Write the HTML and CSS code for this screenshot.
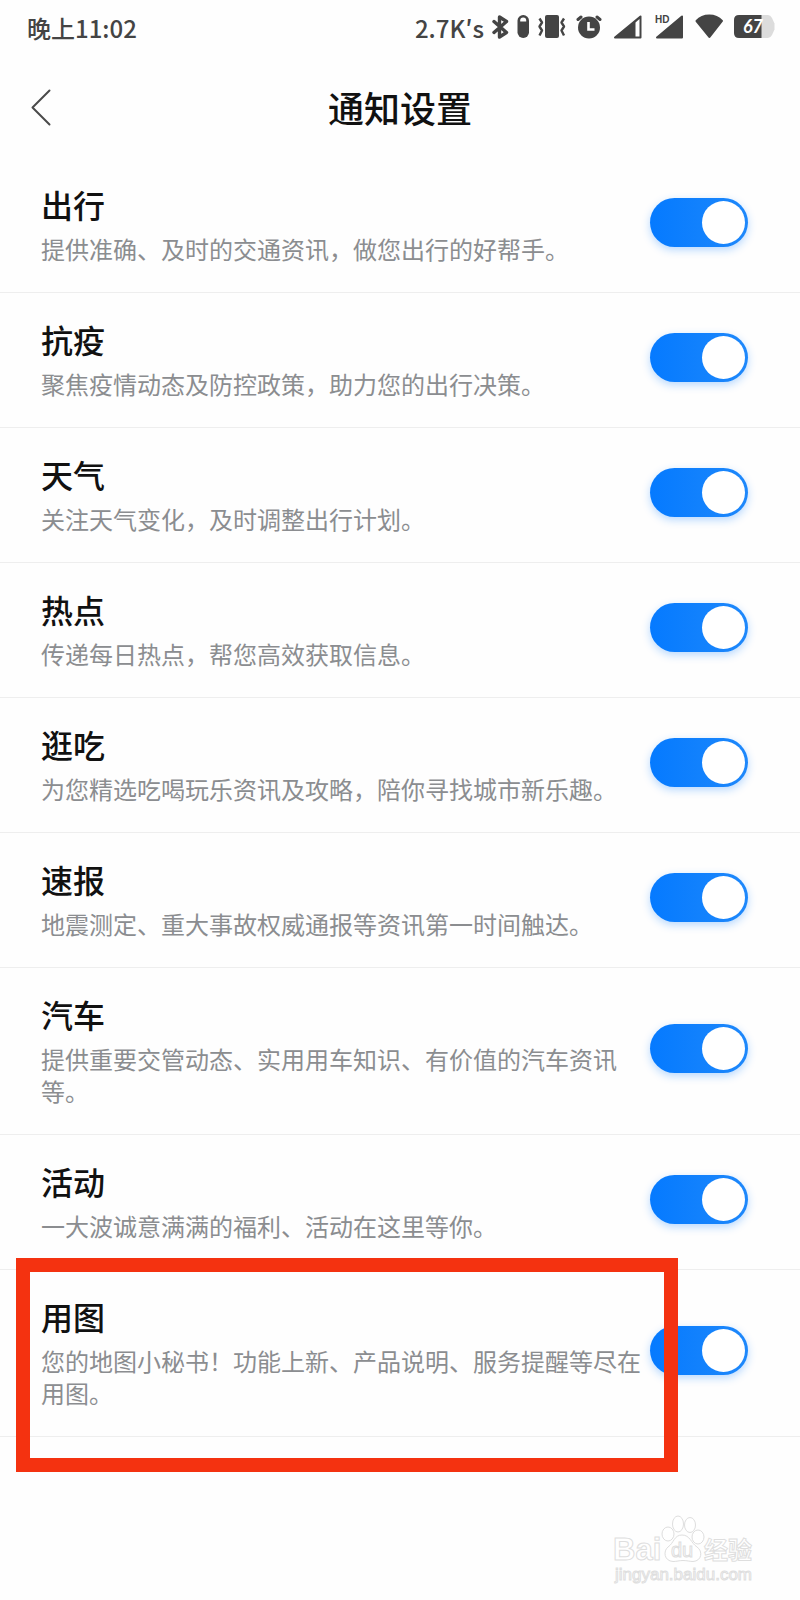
FILE: index.html
```
<!DOCTYPE html>
<html lang="zh-CN">
<head>
    <meta charset="UTF-8">
    <meta name="viewport" content="width=device-width, initial-scale=1.0">
    <title>通知设置</title>
    <link rel="stylesheet" href="styles.css">
</head>
<body>
    <div class="status-bar">
        <span class="time">晚上11:02</span>
        <div class="status-icons">
            <span class="speed">2.7K′s</span>
            <!-- bluetooth -->
            <svg width="17" height="26" viewBox="0 0 17 26" fill="none" stroke="#444" stroke-width="3.400" stroke-linejoin="round" stroke-linecap="round">
                <path d="M2 7.500L14.500 18.500L7.500 23V3L14.500 7.500L2 18.500"/>
            </svg>
            <!-- bluetooth device battery -->
            <svg width="13" height="26" viewBox="0 0 13 26">
                <rect x="0.500" y="1" width="11.500" height="23" rx="5.700" fill="#444"/>
                <path d="M3.200 7.500V6.500a3 3 0 0 1 6 0v1z" fill="#fff"/>
            </svg>
            <!-- vibrate -->
            <svg width="30" height="26" viewBox="0 0 30 26">
                <rect x="7" y="1" width="14" height="23" rx="2" fill="#444"/>
                <path d="M1.500 4.500l2.500 4-2.500 4 2.500 4-2.500 5M26 4.500l-2.500 4 2.500 4-2.500 4 2.500 5" fill="none" stroke="#444" stroke-width="2.400" stroke-linejoin="round"/>
            </svg>
            <!-- alarm -->
            <svg width="29" height="26" viewBox="0 0 29 26">
                <circle cx="13" cy="13.500" r="11" fill="#444"/>
                <path d="M2 5.500L5 3M21 3l3 2.500" stroke="#444" stroke-width="3" stroke-linecap="round"/>
                <path d="M12.500 8v7.500h6" fill="none" stroke="#fff" stroke-width="2.600"/>
            </svg>
            <!-- signal, sim 1 -->
            <svg width="34" height="26" viewBox="0 0 34 26">
                <path d="M2 23.500L27.500 2.500V23.500z" fill="#444" stroke="#444" stroke-width="2" stroke-linejoin="round"/>
                <path d="M22.500 8.500L26.500 5V22.500H22.500z" fill="#fff"/>
            </svg>
            <!-- signal, sim 2 -->
            <svg width="32" height="26" viewBox="0 0 32 26">
                <path d="M2 23.500L27 2.500V23.500z" fill="#444" stroke="#444" stroke-width="2" stroke-linejoin="round"/>
                <text x="0" y="9" class="hd">HD</text>
            </svg>
            <!-- wifi -->
            <svg width="30" height="26" viewBox="0 0 30 26">
                <path d="M1.500 7C8 -0.500 20.500 -0.500 27 7L14.500 23z" fill="#444" stroke="#444" stroke-width="2" stroke-linejoin="round"/>
            </svg>
            <!-- battery -->
            <svg width="43" height="26" viewBox="0 0 43 26">
                <path d="M28 1h7q2.500 0 4 3l2.500 5.500v6L39 21q-1.500 3-4 3h-7z" fill="#dcdcdc"/>
                <path d="M28.500 1H6Q1 1 1 6V19q0 5 5 5H28.500z" fill="#444"/>
                <text x="10" y="19" class="level">67</text>
            </svg>
        </div>
    </div>

    <header class="header">
        <button class="back" type="button" aria-label="返回">
            <svg width="22" height="38" viewBox="0 0 22 38" fill="none" stroke="#4a4a4a" stroke-width="2" stroke-linecap="round" stroke-linejoin="round">
                <path d="M19.500 2.500L2.500 19.500L19.500 36.500"/>
            </svg>
        </button>
        <h1 class="title">通知设置</h1>
    </header>

    <main class="list">
        <label class="row">
            <span class="text">
                <span class="name">出行</span>
                <span class="desc">提供准确、及时的交通资讯，做您出行的好帮手。</span>
            </span>
            <input class="switch" type="checkbox" checked>
        </label>
        <label class="row">
            <span class="text">
                <span class="name">抗疫</span>
                <span class="desc">聚焦疫情动态及防控政策，助力您的出行决策。</span>
            </span>
            <input class="switch" type="checkbox" checked>
        </label>
        <label class="row">
            <span class="text">
                <span class="name">天气</span>
                <span class="desc">关注天气变化，及时调整出行计划。</span>
            </span>
            <input class="switch" type="checkbox" checked>
        </label>
        <label class="row">
            <span class="text">
                <span class="name">热点</span>
                <span class="desc">传递每日热点，帮您高效获取信息。</span>
            </span>
            <input class="switch" type="checkbox" checked>
        </label>
        <label class="row">
            <span class="text">
                <span class="name">逛吃</span>
                <span class="desc">为您精选吃喝玩乐资讯及攻略，陪你寻找城市新乐趣。</span>
            </span>
            <input class="switch" type="checkbox" checked>
        </label>
        <label class="row">
            <span class="text">
                <span class="name">速报</span>
                <span class="desc">地震测定、重大事故权威通报等资讯第一时间触达。</span>
            </span>
            <input class="switch" type="checkbox" checked>
        </label>
        <label class="row">
            <span class="text">
                <span class="name">汽车</span>
                <span class="desc">提供重要交管动态、实用用车知识、有价值的汽车资讯等。</span>
            </span>
            <input class="switch" type="checkbox" checked>
        </label>
        <label class="row">
            <span class="text">
                <span class="name">活动</span>
                <span class="desc">一大波诚意满满的福利、活动在这里等你。</span>
            </span>
            <input class="switch" type="checkbox" checked>
        </label>
        <label class="row marked">
            <span class="text">
                <span class="name">用图</span>
                <span class="desc">您的地图小秘书！功能上新、产品说明、服务提醒等尽在用图。</span>
            </span>
            <input class="switch" type="checkbox" checked>
        </label>
    </main>

    <footer class="watermark">
        <svg width="148" height="78" viewBox="0 0 148 78" fill="#fff" stroke="#dedede" stroke-width="1">
            <text x="3" y="48" class="brand">Bai</text>
            <ellipse cx="58" cy="22" rx="6" ry="7"/>
            <ellipse cx="68" cy="12" rx="5.500" ry="8"/>
            <ellipse cx="80" cy="13" rx="5.500" ry="7.500"/>
            <ellipse cx="88" cy="25" rx="6" ry="7"/>
            <path d="M72 23C64 23 64 31 58 35C53 39 54 49 63 49.500C67 49.500 69 48.500 73 48.500S80 49.500 83 49.500C92 49 93 39 87 35C81 31 80 23 72 23z"/>
            <text x="61" y="45" class="du">du</text>
            <text x="94" y="47" class="jingyan">经验</text>
            <text x="5" y="68" class="site">jingyan.baidu.com</text>
        </svg>
    </footer>
</body>
</html>
```
FILE: styles.css
```
* {
    box-sizing: border-box;
}

body {
    display: flex;
    flex-direction: column;
    min-height: 100vh;
    margin: 0;
    font-family: "Noto Sans CJK SC", sans-serif;
    background-color: #fefefe;
    color: #111;
}

.status-bar {
    display: flex;
    justify-content: space-between;
    align-items: center;
    height: 56px;
    padding: 0 24px 2px 27px;
    font-size: 24px;
    font-weight: 500;
    color: #444;
}

.status-icons {
    display: flex;
    align-items: center;
    gap: 8px;
}

.hd {
    font: bold 10px "Liberation Sans", sans-serif;
    fill: #444;
}

.level {
    font: italic bold 18px Lato, sans-serif;
    fill: #fff;
}

.header {
    display: grid;
    grid-template-columns: 1fr auto 1fr;
    align-items: center;
    height: 102px;
    padding: 0 30px;
}

.back {
    display: flex;
    justify-self: start;
    padding: 0;
    border: none;
    background: none;
    cursor: pointer;
}

.title {
    margin: 0;
    font-size: 36px;
    font-weight: 500;
}

.row {
    display: flex;
    align-items: center;
    gap: 8px;
    padding: 21px 52px 27px 41px;
    border-bottom: 1px solid #eee;
    cursor: pointer;
}

.text {
    display: flex;
    flex: 1;
    flex-direction: column;
    gap: 4px;
}

.name {
    font-size: 32px;
    font-weight: 500;
    line-height: 50px;
}

.desc {
    font-size: 24px;
    line-height: 32px;
    color: #8b8d90;
}

.switch {
    appearance: none;
    flex: none;
    width: 98px;
    height: 49px;
    margin: 0;
    padding: 3px;
    border-radius: 25px;
    background: #ccc;
    cursor: pointer;
}

.switch::before {
    content: "";
    display: block;
    width: 43px;
    height: 43px;
    border-radius: 50%;
    background: #fff;
}

.switch:checked {
    background: linear-gradient(to right, #057aff, #1e88fb);
    box-shadow: 0 3px 9px rgba(20, 130, 255, 0.3);
}

.switch:checked::before {
    margin-left: auto;
}

/* red frame round the highlighted row */
.marked {
    position: relative;
}

.marked::after {
    content: "";
    position: absolute;
    top: -12px;
    right: 122px;
    bottom: -36px;
    left: 16px;
    border: 14px solid #f43210;
    pointer-events: none;
}

.watermark {
    display: flex;
    justify-content: flex-end;
    margin-top: auto;
    padding: 0 42px 10px;
}

.brand {
    font: bold 31px "Liberation Sans", sans-serif;
}

.du {
    font: 20px "Liberation Sans", sans-serif;
}

.jingyan {
    font: bold 24px "Noto Sans CJK SC", sans-serif;
}

.site {
    font: 17px "Liberation Sans", sans-serif;
}
```
